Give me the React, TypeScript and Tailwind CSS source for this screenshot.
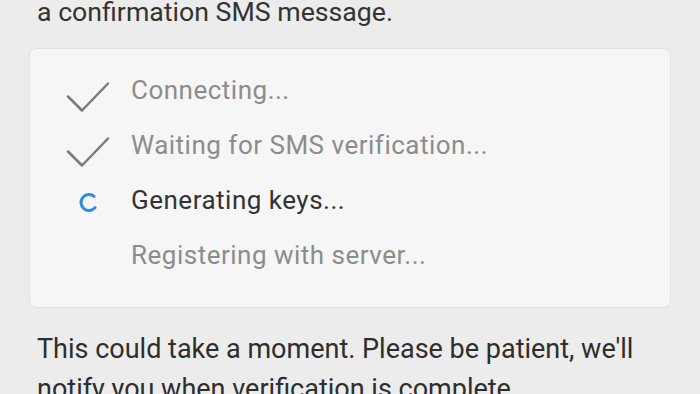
const steps = [
  { label: "Connecting...", state: "done" },
  { label: "Waiting for SMS verification...", state: "done" },
  { label: "Generating keys...", state: "active" },
  { label: "Registering with server...", state: "pending" },
];

function StepIcon({ state }: { state: string }) {
  if (state === "done") {
    return (
      <svg width="44" height="55" viewBox="0 0 44 55" className="shrink-0">
        <path d="M3 33.5 L17 47.5 L43 20.5" fill="none" stroke="#7a7a7a" strokeWidth="2.5" strokeLinecap="round" strokeLinejoin="round" />
      </svg>
    );
  }
  if (state === "active") {
    return (
      <svg width="44" height="55" viewBox="0 0 44 55" className="shrink-0">
        <path d="M29.14 23.37 A8 8 0 1 0 30.13 34.64" fill="none" stroke="#2b8be8" strokeWidth="3" strokeLinecap="round" />
      </svg>
    );
  }
  return <div className="h-[55px] w-[44px] shrink-0" />;
}

export default function App() {
  return (
    <div className="h-[394px] w-[700px] overflow-hidden bg-[#ececec] px-[29px] font-['Roboto',sans-serif]">
      <p className="-mt-[8px] pl-2 text-[26.7px] leading-[40px] text-[#333]">a confirmation SMS message.</p>

      <div className="mt-4 rounded-lg border border-[#e2e2e2] bg-[#f6f6f6] pt-[13.5px] pb-[24.5px] pl-[35px]">
        {steps.map((step) => (
          <div key={step.label} className="flex h-[55px] items-start">
            <StepIcon state={step.state} />
            <span
              className={
                step.state === "active"
                  ? "ml-[22px] text-[26px] leading-[55px] tracking-[0.5px] text-[#333]"
                  : "ml-[22px] text-[26px] leading-[55px] tracking-[0.5px] text-[#8c8c8c]"
              }
            >
              {step.label}
            </span>
          </div>
        ))}
      </div>

      <p className="mt-[21px] pl-2 text-[27px] leading-[40px] text-[#2e2e2e]">
        This could take a moment. Please be patient, we'll notify you when verification is complete.
      </p>
    </div>
  );
}
